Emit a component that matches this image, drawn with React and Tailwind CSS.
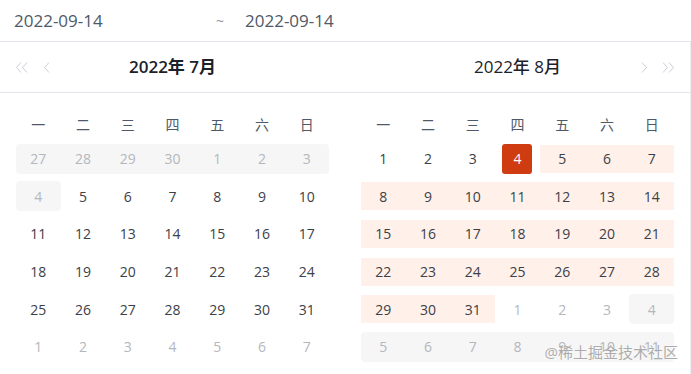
import React from "react";

const WEEK = ["一", "二", "三", "四", "五", "六", "日"];

// t: n = normal, m = muted, w = selected; b: g = grey strip, r = range, s = selected
const seq = (a, b, t = "n", bg = null) => {
  const out = [];
  for (let d = a; d <= b; d++) out.push({ d, t, bg });
  return out;
};

const july = [
  [...seq(27, 30, "m", "g"), ...seq(1, 3, "m", "g")],
  [{ d: 4, t: "m", bg: "g" }, ...seq(5, 10)],
  seq(11, 17),
  seq(18, 24),
  seq(25, 31),
  seq(1, 7, "m"),
];

const august = [
  [...seq(1, 3), { d: 4, t: "w", bg: "s" }, ...seq(5, 7, "n", "r")],
  seq(8, 14, "n", "r"),
  seq(15, 21, "n", "r"),
  seq(22, 28, "n", "r"),
  [...seq(29, 31, "n", "r"), ...seq(1, 3, "m"), { d: 4, t: "m", bg: "g" }],
  seq(5, 11, "m", "g"),
];

const textColor = {
  n: "text-[#3c4048]",
  m: "text-[#b4b7bd]",
  w: "text-white",
};

const DoubleLeft = () => (
  <svg width="13" height="11" viewBox="0 0 13 11" fill="none" stroke="#c9cdd4" strokeWidth="1">
    <path d="M6 0.5L1.5 5.5L6 10.5" />
    <path d="M12 0.5L7.5 5.5L12 10.5" />
  </svg>
);

const Left = () => (
  <svg width="7" height="11" viewBox="0 0 7 11" fill="none" stroke="#c9cdd4" strokeWidth="1">
    <path d="M6 0.5L1.5 5.5L6 10.5" />
  </svg>
);

const Right = () => (
  <svg width="7" height="11" viewBox="0 0 7 11" fill="none" stroke="#c9cdd4" strokeWidth="1">
    <path d="M1 0.5L5.5 5.5L1 10.5" />
  </svg>
);

const DoubleRight = () => (
  <svg width="13" height="11" viewBox="0 0 13 11" fill="none" stroke="#c9cdd4" strokeWidth="1">
    <path d="M1 0.5L5.5 5.5L1 10.5" />
    <path d="M7 0.5L11.5 5.5L7 10.5" />
  </svg>
);

const Cell = ({ cell, prev, next }) => {
  if (cell.bg === "s") {
    return (
      <div className="flex items-center justify-center h-full">
        <div className="w-[30px] h-[30px] rounded-[3px] bg-[#cf3c11] flex items-center justify-center text-white">
          {cell.d}
        </div>
      </div>
    );
  }
  const roundL = cell.bg === "g" && prev?.bg !== "g";
  const roundR = cell.bg === "g" && next?.bg !== "g";
  let strip = "h-[28px]";
  if (cell.bg === "g") strip = "h-[30px] bg-[#f6f6f6]";
  if (cell.bg === "r") strip = "h-[28px] bg-[#fff1e9]";
  return (
    <div className="flex items-center h-full">
      <div
        className={`w-full flex items-center justify-center ${strip} ${roundL ? "rounded-l-[4px]" : ""} ${roundR ? "rounded-r-[4px]" : ""} ${textColor[cell.t]}`}
      >
        {cell.d}
      </div>
    </div>
  );
};

const Month = ({ rows }) => (
  <div className="px-4 pt-[15px]">
    <div className="grid grid-cols-7 h-[32px] items-center text-[14px] text-[#4e5969]">
      {WEEK.map((w) => (
        <div key={w} className="text-center">
          {w}
        </div>
      ))}
    </div>
    {rows.map((row, i) => (
      <div key={i} className="grid grid-cols-7 h-[37.6px] text-[14px]">
        {row.map((cell, j) => (
          <Cell key={j} cell={cell} prev={row[j - 1]} next={row[j + 1]} />
        ))}
      </div>
    ))}
  </div>
);

export default function App() {
  return (
    <div
      className="relative w-[691px] h-[374px] bg-white overflow-hidden"
      style={{ fontFamily: '"Open Sans", "Noto Sans CJK SC", sans-serif' }}
    >
      <div className="flex items-center h-[42px] border-b border-[#e5e6eb] text-[17px] text-[#4e5969]">
        <span className="w-[206px] pl-[14px]">2022-09-14</span>
        <span className="w-[28px] text-center text-[14px] text-[#86909c]">~</span>
        <span className="ml-[11px]">2022-09-14</span>
      </div>

      <div className="border-r border-[#eceef1] h-[332px]">
        <div className="grid grid-cols-2 h-[51px] border-b border-[#e5e6eb]">
          <div className="relative flex items-center justify-center">
            <div className="absolute left-[15px] top-[20px] flex items-center gap-[15px]">
              <DoubleLeft />
              <Left />
            </div>
            <span className="text-[17px] font-semibold text-[#1d2129]">2022年 7月</span>
          </div>
          <div className="relative flex items-center justify-center">
            <span className="text-[17px] font-medium text-[#1d2129]">2022年 8月</span>
            <div className="absolute right-[15px] top-[20px] flex items-center gap-[14px]">
              <Right />
              <DoubleRight />
            </div>
          </div>
        </div>

        <div className="grid grid-cols-2">
          <Month rows={july} />
          <Month rows={august} />
        </div>
      </div>

      <div
        className="absolute right-[13px] bottom-[11px] text-[15px] text-[#9a9a9a] opacity-80"
        style={{ textShadow: "0 0 2px #fff" }}
      >
        @稀土掘金技术社区
      </div>
    </div>
  );
}
